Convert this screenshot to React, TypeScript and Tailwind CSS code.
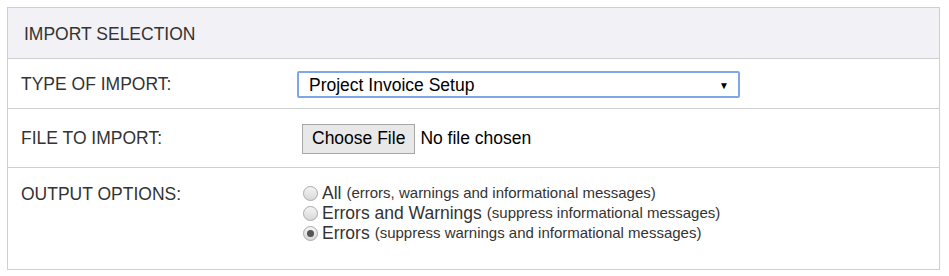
import { useState } from 'react';

const options = [
  { value: 'all', label: 'All', note: '(errors, warnings and informational messages)' },
  { value: 'warn', label: 'Errors and Warnings', note: '(suppress informational messages)' },
  { value: 'errors', label: 'Errors', note: '(suppress warnings and informational messages)' },
];

const Radio = ({ checked }: { checked: boolean }) => (
  <span className="mr-[4px] mt-[3px] flex h-[15px] w-[15px] shrink-0 items-center justify-center rounded-full border border-[#a9a9a9] bg-gradient-to-b from-[#f4f4f4] to-[#d8d8d8]">
    {checked && <span className="h-[7px] w-[7px] rounded-full bg-[#555]" />}
  </span>
);

export default function App() {
  const [output, setOutput] = useState('errors');

  return (
    <div className="p-[7px] pr-[9px] font-['Liberation_Sans',Arial,sans-serif] text-[17.5px] text-[#333]">
      <div className="border border-[#cfcfcf]">
        {/* Header */}
        <div className="flex h-[51px] items-center border-b border-[#cfcfcf] bg-[#f2f1f6] pl-[16px] pt-[2px]">
          IMPORT SELECTION
        </div>

        {/* Type of import */}
        <div className="flex h-[50px] items-center border-b border-[#cfcfcf] pt-[2px]">
          <div className="w-[289px] pl-[13px]">TYPE OF IMPORT:</div>
          <div className="flex h-[27px] w-[443px] items-center justify-between rounded-[2px] border-2 border-[#7ea6ec] bg-white pl-[10px] pr-[9px] pt-[1px] text-black">
            <span>Project Invoice Setup</span>
            <span className="text-[10px]">▼</span>
          </div>
        </div>

        {/* File */}
        <div className="flex h-[59px] items-center border-b border-[#cfcfcf] pt-[1px]">
          <div className="w-[289px] pl-[13px]">FILE TO IMPORT:</div>
          <div className="ml-[5px] flex items-center text-black">
            <span className="flex h-[30px] items-center border border-[#a6a6a6] bg-[#e8e8e8] px-[9px]">Choose File</span>
            <span className="ml-[5px]">No file chosen</span>
          </div>
        </div>

        {/* Output options */}
        <div className="flex h-[101px] items-start pt-[14px]">
          <div className="w-[289px] pl-[13px] pt-[2px] leading-[20px]">OUTPUT OPTIONS:</div>
          <div className="ml-[6px] flex flex-col pt-[1px]">
            {options.map((o) => (
              <label key={o.value} className="flex h-[20px] cursor-pointer items-start leading-[20px]" onClick={() => setOutput(o.value)}>
                <Radio checked={output === o.value} />
                <span className="text-[17.5px]">{o.label}</span>
                <span className="ml-[5px] text-[15px]">{o.note}</span>
              </label>
            ))}
          </div>
        </div>
      </div>
    </div>
  );
}
